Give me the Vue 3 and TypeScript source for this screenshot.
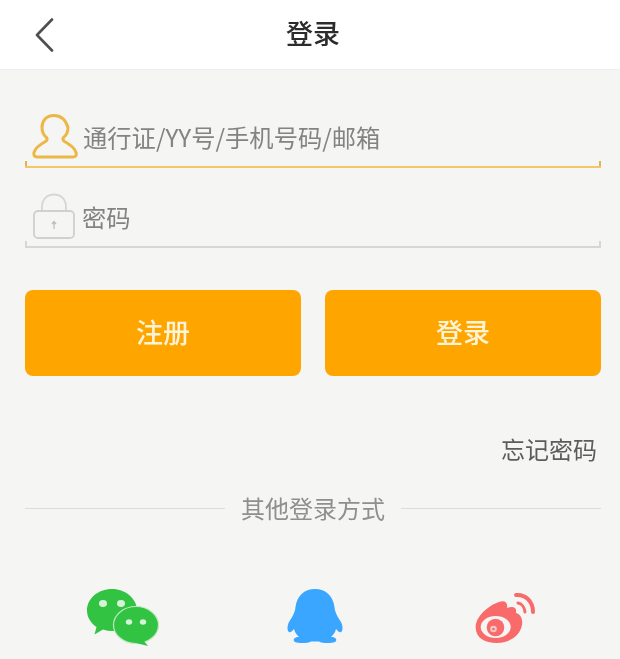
<script setup lang="ts">
const socials = ['wechat', 'qq', 'weibo'] as const
</script>

<template>
  <div class="page">
    <header class="bar">
      <svg class="back" width="22" height="34" viewBox="0 0 22 34">
        <path d="M18 1.500 L3 17 L18 32.500" fill="none" stroke="#4f4f4f" stroke-width="2.600" stroke-linecap="round" stroke-linejoin="round" />
      </svg>
      <h1 class="title">登录</h1>
    </header>

    <main class="body">
      <div class="field active">
        <svg class="ficon" width="46" height="45" viewBox="0 0 46 45">
          <path d="M22 1.500C14 1.500 10 7 10 13.500c0 4.500 2 8 4.500 10 1 1.500.5 3-1 4C8 30.500 3 34 2 38.500c-.5 3 .5 4.500 3 4.500h36c2.500 0 3.800-1.500 3-4.500-1-4.500-6-8-11.500-11-1.500-1-2-2.500-1-4 2.500-2 4.500-5.500 4.500-10C34 7 30 1.500 22 1.500z" fill="none" stroke="#ebb847" stroke-width="3" stroke-linejoin="round" />
        </svg>
        <span class="ph">通行证/YY号/手机号码/邮箱</span>
      </div>

      <div class="field">
        <svg class="ficon" width="42" height="46" viewBox="0 0 42 46">
          <path d="M9 18v-4C9 6.500 14 1.500 21 1.500S33 6.500 33 14v4" fill="none" stroke="#d6d6d5" stroke-width="1.800" />
          <rect x="1" y="18" width="40" height="27" rx="4" fill="none" stroke="#d0d0cf" stroke-width="1.800" />
          <path d="M21 36v-7M19 31l2-2.500 2 2.500" fill="none" stroke="#bdbdbc" stroke-width="1.300" />
        </svg>
        <span class="ph">密码</span>
      </div>

      <div class="actions">
        <button class="btn" type="button">注册</button>
        <button class="btn" type="button">登录</button>
      </div>

      <div class="forgot">忘记密码</div>

      <div class="divider"><span>其他登录方式</span></div>

      <div class="socials">
        <div v-for="s in socials" :key="s" class="social">
          <svg v-if="s === 'wechat'" width="72" height="57" viewBox="0 0 72 57">
            <path d="M25 0C11 0 0 9.500 0 21.500c0 6.800 3.800 12.500 9.500 16.500L7.500 45.500l8.500-5c3 1 6 1.500 9 1.500 14 0 25-9 25-20.500S39 0 25 0z" fill="#32c343" />
            <ellipse cx="49" cy="36" rx="22.500" ry="18.500" fill="#32c343" stroke="#bfe9c2" stroke-width="1.200" />
            <path d="M56 51l5 6-12-3z" fill="#32c343" />
            <ellipse cx="16" cy="14.500" rx="4" ry="3.400" fill="#d6f3d8" />
            <ellipse cx="34" cy="14.500" rx="4" ry="3.400" fill="#d6f3d8" />
            <ellipse cx="42" cy="33" rx="3.200" ry="2.800" fill="#d6f3d8" />
            <ellipse cx="56" cy="33" rx="3.200" ry="2.800" fill="#d6f3d8" />
          </svg>

          <svg v-else-if="s === 'qq'" width="56" height="55" viewBox="0 0 56 55">
            <path d="M28 0C39 0 46 7 47.500 18 48 24 51 28 54 33c2 4 2 9 0 10-2 1-4-2-5-3-1 4-3 6-5 8 4 0 6 2 5 4-1 2-7 2-11 2-3 0-5-1-6-1.500h-8c-1 .5-3 1.500-6 1.500-4 0-10 0-11-2-1-2 1-4 5-4-2-2-4-4-5-8-1 1-3 4-5 3-2-1-2-6 0-10 3-5 6-9 6.500-15C10 7 17 0 28 0z" fill="#3aa6ff" />
          </svg>

          <svg v-else width="62" height="52" viewBox="0 0 62 52">
            <path d="M.7 36C0 27 10 15 24 10c6-2 9 1 8 6 6-2 10-1 9 5 5 1 7 7 6 12-2 11-13 18-25 18C10 51 1 46 .7 36z" fill="#f96b6b" />
            <ellipse cx="20.700" cy="35" rx="15" ry="11" fill="#f6f5f3" />
            <circle cx="20.500" cy="35.500" r="8.800" fill="#f96b6b" />
            <circle cx="18.500" cy="37" r="3.300" fill="#f6c9c9" />
            <circle cx="18.500" cy="37" r="1.300" fill="#f96b6b" />
            <path d="M43 11c3.500.5 6.500 4 7 9" fill="none" stroke="#f96b6b" stroke-width="3" stroke-linecap="round" />
            <path d="M41 3c9-1 17 6 17 17" fill="none" stroke="#f96b6b" stroke-width="4" stroke-linecap="round" />
          </svg>
        </div>
      </div>
    </main>
  </div>
</template>

<style>
html, body { margin: 0; background: #f5f5f4; }
</style>

<style scoped>
.page {
  width: 620px;
  height: 659px;
  overflow: hidden;
  background: #f5f5f4;
  color: #555;
  font-family: "Noto Sans CJK SC", "Liberation Sans", sans-serif;
  filter: blur(0.6px);
}
.bar {
  height: 70px;
  box-sizing: border-box;
  position: relative;
  display: flex;
  align-items: center;
  justify-content: center;
  padding: 0 0 4px 6px;
  background: #fff;
  border-bottom: 1px solid #eeeeec;
}
.back {
  position: absolute;
  left: 34px;
  top: 18px;
}
.title {
  margin: 0;
  font-size: 27px;
  font-weight: 500;
  color: #2c2c2c;
  line-height: 1;
}
.body {
  padding: 0 19px 0 25px;
  display: flex;
  flex-direction: column;
}
.field {
  height: 80px;
  box-sizing: border-box;
  position: relative;
  display: flex;
  align-items: center;
  gap: 7px;
  padding: 17px 0 0 8px;
  border-bottom: 2px solid #d6d6d5;
}
.field::before,
.field::after {
  content: "";
  position: absolute;
  bottom: 0;
  width: 2px;
  height: 5px;
  background: #d6d6d5;
}
.field::before { left: 0; }
.field::after { right: 0; }
.field.active {
  height: 98px;
  padding: 36px 0 0 7px;
  gap: 5px;
  border-bottom-color: #f5c56a;
}
.field.active::before,
.field.active::after { background: #dfb455; }
.ficon { flex: none; }
.ph {
  margin-top: 3px;
  font-size: 24.300px;
  line-height: 1;
  color: #838383;
}
.actions {
  display: flex;
  gap: 24px;
  margin-top: 42px;
}
.btn {
  flex: 1;
  height: 86px;
  padding: 0 0 4px;
  border: 0;
  border-radius: 8px;
  background: #ffa500;
  color: #fdf3d6;
  font: 500 27px "Noto Sans CJK SC", sans-serif;
}
.forgot {
  margin-top: 58px;
  padding-right: 4px;
  text-align: right;
  font-size: 24px;
  line-height: 30px;
  color: #5c5c5c;
}
.divider {
  margin-top: 29px;
  display: flex;
  align-items: center;
  gap: 16px;
  font-size: 24px;
  line-height: 30px;
  color: #8f8f8f;
}
.divider::before,
.divider::after {
  content: "";
  flex: 1;
  height: 1px;
  background: #dcdcdb;
}
.socials {
  margin-top: 66px;
  display: grid;
  grid-template-columns: 134px 1fr 128px;
  padding: 0 64px 0 62px;
  align-items: start;
}
.social { display: flex; justify-content: center; }
.social:first-child { justify-content: flex-start; }
.social:last-child { justify-content: flex-end; padding-top: 3px; }
</style>
